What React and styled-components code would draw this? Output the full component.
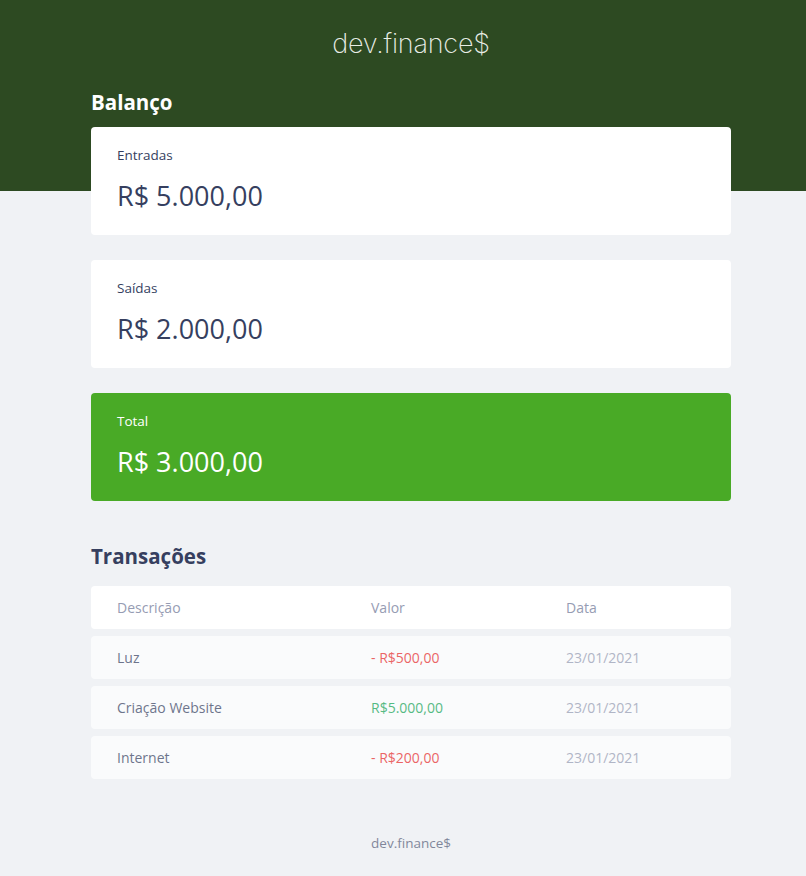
import React from 'react'
import styled, { createGlobalStyle } from 'styled-components'

const GlobalStyle = createGlobalStyle`
  * { box-sizing: border-box; margin: 0; padding: 0; }
  body {
    background: #f0f2f5;
    font-family: "Open Sans", "Noto Sans", sans-serif;
  }
`

const Header = styled.header`
  background: #2d4a22;
  height: 191px;
  padding: 27px 0 0 16px;
  text-align: center;
`

const Logo = styled.h1`
  font-family: "Inter", "Open Sans", sans-serif;
  font-weight: 200;
  font-size: 27px;
  line-height: 34px;
  color: #e8ede6;
  letter-spacing: -0.2px;
`

const Main = styled.main`
  width: 640px;
  margin: -101px 0 0 91px;
`

const SectionTitle = styled.h2`
  font-size: 20.5px;
  line-height: 24px;
  font-weight: 700;
  color: ${({ light }) => (light ? '#fff' : '#363f5f')};
  margin-bottom: ${({ light }) => (light ? '13px' : '18px')};
`

const Cards = styled.section`
  display: flex;
  flex-direction: column;
  gap: 25px;
  margin-bottom: 43px;
`

const Card = styled.div`
  background: ${({ total }) => (total ? '#49aa26' : '#fff')};
  color: ${({ total }) => (total ? '#fff' : '#363f5f')};
  border-radius: 4px;
  height: 108px;
  padding: 18px 26px;
`

const CardLabel = styled.h3`
  font-size: 13.5px;
  font-weight: 400;
  line-height: 20px;
`

const CardValue = styled.p`
  font-size: 27px;
  line-height: 34px;
  margin-top: 14px;
`

const Table = styled.div`
  display: flex;
  flex-direction: column;
  gap: 7px;
`

const Row = styled.div`
  display: grid;
  grid-template-columns: 254px 195px 1fr;
  align-items: center;
  height: 43px;
  border-radius: 4px;
  background: #fff;
  opacity: ${({ head }) => (head ? 1 : 0.7)};
  font-size: 14px;
  color: ${({ head }) => (head ? '#969cb3' : '#363f5f')};
`

const Cell = styled.span`
  padding-left: 26px;
  color: ${({ kind }) =>
    kind === 'income' ? '#12a454' :
    kind === 'expense' ? '#e92929' :
    kind === 'date' ? '#969cb3' :
    'inherit'};
`

const Footer = styled.footer`
  text-align: center;
  padding: 54px 0 24px 16px;
  font-size: 13.5px;
  line-height: 20px;
  color: #363f5f;
  opacity: 0.6;
`

const transactions = [
  { desc: 'Luz', value: '- R$500,00', kind: 'expense', date: '23/01/2021' },
  { desc: 'Criação Website', value: 'R$5.000,00', kind: 'income', date: '23/01/2021' },
  { desc: 'Internet', value: '- R$200,00', kind: 'expense', date: '23/01/2021' },
]

const App = () => (
  <>
    <GlobalStyle />
    <Header>
      <Logo>dev.finance$</Logo>
    </Header>
    <Main>
      <SectionTitle light>Balanço</SectionTitle>
      <Cards>
        <Card>
          <CardLabel>Entradas</CardLabel>
          <CardValue>R$ 5.000,00</CardValue>
        </Card>
        <Card>
          <CardLabel>Saídas</CardLabel>
          <CardValue>R$ 2.000,00</CardValue>
        </Card>
        <Card total>
          <CardLabel>Total</CardLabel>
          <CardValue>R$ 3.000,00</CardValue>
        </Card>
      </Cards>
      <SectionTitle>Transações</SectionTitle>
      <Table>
        <Row head>
          <Cell>Descrição</Cell>
          <Cell>Valor</Cell>
          <Cell>Data</Cell>
        </Row>
        {transactions.map((t, key) => (
          <Row key={key}>
            <Cell>{t.desc}</Cell>
            <Cell kind={t.kind}>{t.value}</Cell>
            <Cell kind="date">{t.date}</Cell>
          </Row>
        ))}
      </Table>
    </Main>
    <Footer>dev.finance$</Footer>
  </>
)

export default App
